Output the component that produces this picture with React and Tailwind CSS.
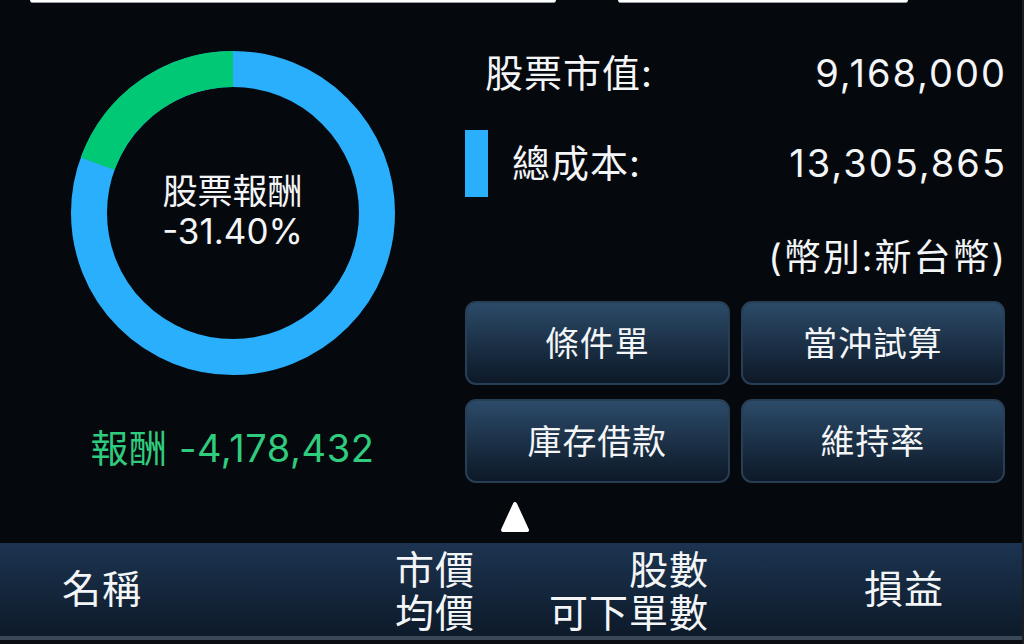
import React from "react";

const font = { fontFamily: 'Inter, "Noto Sans CJK TC", sans-serif' };

const Ring = () => (
  <svg width="324" height="324" viewBox="0 0 324 324">
    <circle cx="162" cy="162" r="144" fill="none" stroke="#2aaffc" strokeWidth="36" />
    {/* green slice, about 70 degrees from the top going left */}
    <path d="M162 18 A144 144 0 0 0 26.7 112.75" fill="none" stroke="#00c874" strokeWidth="36" />
  </svg>
);

const ActionButton = ({ label }) => (
  <button className="h-[84px] rounded-[11px] border-2 border-[#283e54] bg-linear-to-b from-[#2c4b69] to-[#0d1928] text-[34px] text-[#f3f5f7] tracking-wide">
    {label}
  </button>
);

export default function App() {
  return (
    <div
      className="w-[1024px] h-[644px] bg-[#05080d] text-[#f3f5f7] overflow-hidden flex flex-col border-r-2 border-[#1a1f26]"
      style={font}
    >
      {/* cut off fields from the section above */}
      <div className="h-[5px] flex pl-[30px]">
        <div className="w-[526px] h-[3px] bg-white rounded-b-[6px] border-b border-[#9aa0a6]" />
        <div className="w-[290px] h-[3px] ml-[62px] bg-white rounded-b-[6px] border-b border-[#9aa0a6]" />
      </div>

      <div className="h-[538px] flex">
        {/* left: chart */}
        <div className="w-[465px] flex flex-col items-center">
          <div className="relative mt-[46px] w-[324px] h-[324px]">
            <Ring />
            <div className="absolute inset-0 flex flex-col items-center justify-center text-[35px] leading-[40px] pb-[4px]">
              <span>股票報酬</span>
              <span>-31.40%</span>
            </div>
          </div>
          <p className="mt-[51px] text-[38px] leading-[44px] tracking-[0.6px] text-[#30cc7e]">
            報酬 -4,178,432
          </p>
        </div>

        {/* right: totals and actions */}
        <div className="w-[540px] flex flex-col">
          <div className="mt-[44px] h-[48px] flex items-center justify-between">
            <span className="pl-[20px] text-[38px] tracking-[1px]">股票市值:</span>
            <span className="text-[38px] tracking-[2px] -mr-[2px]">9,168,000</span>
          </div>
          <div className="mt-[33px] h-[67px] flex items-center justify-between">
            <div className="flex items-center">
              <span className="w-[23px] h-[67px] bg-[#2aaffc]" />
              <span className="ml-[24px] text-[38px] tracking-[1px]">總成本:</span>
            </div>
            <span className="text-[38px] tracking-[2px] -mr-[2px]">13,305,865</span>
          </div>
          <div className="mt-[37px] h-[48px] flex items-center justify-end text-[37px] tracking-[2px] -mr-[2px]">
            (幣別:新台幣)
          </div>
          <div className="mt-[19px] grid grid-cols-2 gap-x-[11px] gap-y-[14px]">
            <ActionButton label="條件單" />
            <ActionButton label="當沖試算" />
            <ActionButton label="庫存借款" />
            <ActionButton label="維持率" />
          </div>
          <svg className="mt-[17px] ml-[34px]" width="32" height="34" viewBox="0 0 32 34">
            <path d="M16 4 L28 30 L4 30 Z" fill="white" stroke="white" strokeWidth="4" strokeLinejoin="round" />
          </svg>
        </div>
      </div>

      {/* list header */}
      <div className="h-[93px] flex items-center pl-[62px] bg-linear-to-b from-[#1c3451] to-[#0d1a29] text-[39px] tracking-[1px]">
        <span className="w-[333px]">名稱</span>
        <div className="w-[77px] flex flex-col leading-[43px] pt-[2px] whitespace-nowrap">
          <span>市價</span>
          <span>均價</span>
        </div>
        <div className="w-[237px] flex flex-col items-end leading-[43px] pt-[2px] -mr-[1px]">
          <span>股數</span>
          <span>可下單數</span>
        </div>
        <span className="ml-[156px]">損益</span>
      </div>
      <div className="h-[4px] bg-[#3a4756]" />
      <div className="flex-1 bg-[#0a0d12]" />
    </div>
  );
}
